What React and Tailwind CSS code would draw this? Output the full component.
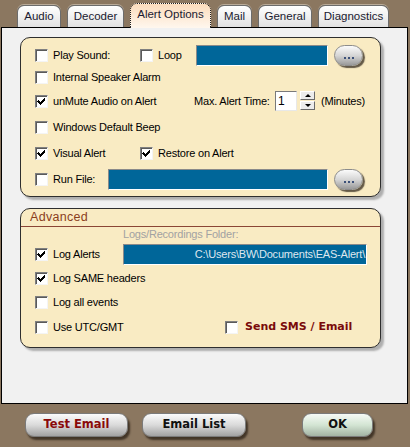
import React from 'react';

// --- Dados das abas ---
const tabs = [
  { name: 'Audio', w: 'w-[44px]' },
  { name: 'Decoder', w: 'w-[57px]' },
  { name: 'Alert Options', w: 'w-[81px]', active: true },
  { name: 'Mail', w: 'w-[35px]' },
  { name: 'General', w: 'w-[54px]' },
  { name: 'Diagnostics', w: 'w-[71px]' },
];

function CheckBox({ checked }) {
  return (
    <span className="flex h-[13px] w-[13px] shrink-0 items-center justify-center border border-t-[#808080] border-l-[#808080] border-b-[#f4f4f4] border-r-[#f4f4f4] bg-white shadow-[inset_1px_1px_0_#5a5a5a]">
      {checked && (
        <svg width="9" height="9" viewBox="0 0 9 9" shapeRendering="crispEdges">
          <path d="M1 3h1v1h1v1h1v-1h1v-1h1v-1h1v-1h1v3h-1v1h-1v1h-1v1h-1v1h-1v-1h-1v-1h-1v-1h-1z" fill="#000" />
        </svg>
      )}
    </span>
  );
}

function Check({ checked, label, className = '', labelClass = '' }) {
  return (
    <label className={`flex items-center gap-[5px] ${className}`}>
      <CheckBox checked={checked} />
      <span className={labelClass}>{label}</span>
    </label>
  );
}

function BlueBox({ className = '', children }) {
  return (
    <div className={`border border-t-[#8a8a8a] border-l-[#8a8a8a] border-b-white border-r-white bg-[#006699] ${className}`}>
      {children}
    </div>
  );
}

function DotsButton() {
  return (
    <div className="ml-[6px] flex h-[21px] w-[29px] items-end justify-center gap-[2px] rounded-full border border-[#8c8c8c] bg-linear-to-b from-[#fbfbfb] via-[#d6d6d6] to-[#9a9a9a] pb-[6px] shadow-[2px_2px_1px_rgba(50,40,30,0.75)]">
      <span className="h-[2px] w-[2px] bg-[#3b5078]" />
      <span className="h-[2px] w-[2px] bg-[#3b5078]" />
      <span className="h-[2px] w-[2px] bg-[#3b5078]" />
    </div>
  );
}

function BigButton({ children, className = '', green = false }) {
  return (
    <div
      className={`flex h-[24px] items-center justify-center rounded-[9px] border border-[#7a7a7a] font-['DejaVu_Sans',sans-serif] text-[11.5px] font-bold tracking-normal shadow-[2px_3px_2px_rgba(35,25,15,0.7)] ${
        green
          ? 'bg-linear-to-b from-[#f6faf6] via-[#d3e5d3] to-[#a3b3a3]'
          : 'bg-linear-to-b from-[#fbfbfb] via-[#dadada] to-[#a2a2a2]'
      } ${className}`}
    >
      {children}
    </div>
  );
}

export default function App() {
  return (
    <div className="h-[447px] w-[410px] overflow-hidden bg-[#8b7760] font-['Liberation_Sans',Arial,sans-serif] text-[11px] tracking-[-0.2px] text-black">
      {/* Abas */}
      <div className="flex h-[27px] items-end gap-[6px] pl-[17px]">
        {tabs.map((t) =>
          t.active ? (
            <div
              key={t.name}
              className={`relative z-10 -mb-px flex h-[25px] items-center justify-center rounded-t-[7px] border border-b-0 border-dotted border-[#202020] bg-linear-to-b from-[#fbdcbc] to-[#fff7ee] pb-[2px] text-[11.5px] tracking-normal text-[#1a1a30] ${t.w}`}
            >
              {t.name}
            </div>
          ) : (
            <div
              key={t.name}
              className={`flex h-[22px] items-center justify-center rounded-t-[7px] border border-b-0 border-[#6c6c6c] bg-linear-to-b from-white to-[#e2e2e2] pt-[1px] text-[11.5px] tracking-normal text-[#1a1a30] shadow-[0_-1px_0_#b9ab99] ${t.w}`}
            >
              {t.name}
            </div>
          )
        )}
      </div>

      {/* Painel */}
      <div className="ml-[1px] h-[377px] w-[407px] border border-black bg-[#f1f1f1]">
        {/* Grupo 1 */}
        <div className="ml-[18px] mt-[9px] h-[160px] w-[361px] rounded-[10px] border border-[#2e2e2e] bg-[#f9ebc3] pl-[14px] pt-[6px] shadow-[3px_3px_2px_rgba(0,0,0,0.28)]">
          <div className="flex h-[22px] items-center">
            <Check label="Play Sound:" className="w-[105px]" />
            <Check label="Loop" className="w-[56px]" />
            <BlueBox className="h-[21px] w-[132px]" />
            <DotsButton />
          </div>
          <div className="flex h-[22px] items-center">
            <Check label="Internal Speaker Alarm" />
          </div>
          <div className="flex h-[26px] items-center">
            <Check checked label="unMute Audio on Alert" className="w-[159px]" />
            <span className="w-[81px]">Max. Alert Time:</span>
            <div className="flex h-[20px] w-[22px] items-center border border-t-[#7a7a7a] border-l-[#7a7a7a] border-b-[#e8e8e8] border-r-[#e8e8e8] bg-white pl-[2px] text-[12px]">
              1
            </div>
            <div className="ml-[3px] flex h-[20px] w-[15px] flex-col gap-px">
              <div className="flex h-[9px] items-center justify-center border border-t-white border-l-white border-b-[#6a6a6a] border-r-[#6a6a6a] bg-[#ececec]">
                <span className="h-0 w-0 border-x-[3px] border-b-[3px] border-x-transparent border-b-black" />
              </div>
              <div className="flex h-[9px] items-center justify-center border border-t-white border-l-white border-b-[#6a6a6a] border-r-[#6a6a6a] bg-[#ececec]">
                <span className="h-0 w-0 border-x-[3px] border-t-[3px] border-x-transparent border-t-black" />
              </div>
            </div>
            <span className="ml-[6px]">(Minutes)</span>
          </div>
          <div className="flex h-[26px] items-center">
            <Check label="Windows Default Beep" />
          </div>
          <div className="flex h-[26px] items-center">
            <Check checked label="Visual Alert" className="w-[105px]" />
            <Check checked label="Restore on Alert" />
          </div>
          <div className="flex h-[26px] items-center">
            <Check label="Run File:" className="w-[73px]" />
            <BlueBox className="h-[21px] w-[220px]" />
            <DotsButton />
          </div>
        </div>

        {/* Grupo 2 - Avançado */}
        <div className="ml-[18px] mt-[11px] w-[361px] rounded-[10px] border border-[#2e2e2e] bg-[#f9ebc3] pb-[8px] shadow-[3px_3px_2px_rgba(0,0,0,0.28)]">
          <div className="flex h-[18px] items-center border-b border-[#8b4535] pl-[9px] text-[12.5px] tracking-[0.3px] text-[#8a3d1c]">
            Advanced
          </div>
          <div className="flex h-[15px] items-center pl-[102px] text-[#a2a2a2]">Logs/Recordings Folder:</div>
          <div className="pl-[14px]">
            <div className="flex h-[24px] items-center">
              <Check checked label="Log Alerts" className="w-[88px]" />
              <BlueBox className="flex h-[21px] w-[244px] items-center justify-end overflow-hidden whitespace-nowrap pr-[1px] text-[#dfe7ef]">
                C:\Users\BW\Documents\EAS-Alert\
              </BlueBox>
            </div>
            <div className="flex h-[24px] items-center">
              <Check checked label="Log SAME headers" />
            </div>
            <div className="flex h-[25px] items-center">
              <Check label="Log all events" />
            </div>
            <div className="flex h-[24px] items-center">
              <Check label="Use UTC/GMT" className="w-[190px]" />
              <Check
                label="Send SMS / Email"
                className="gap-[7px]"
                labelClass="font-['DejaVu_Sans',sans-serif] text-[11px] font-bold tracking-normal text-[#7a0a0a]"
              />
            </div>
          </div>
        </div>
      </div>

      {/* Botões */}
      <div className="mt-[9px] flex">
        <BigButton className="ml-[25px] w-[103px] text-[#8a0a0a]">Test Email</BigButton>
        <BigButton className="ml-[14px] w-[104px] text-[#101010]">Email List</BigButton>
        <BigButton green className="ml-[56px] w-[71px] text-[#101010]">
          OK
        </BigButton>
      </div>
    </div>
  );
}
